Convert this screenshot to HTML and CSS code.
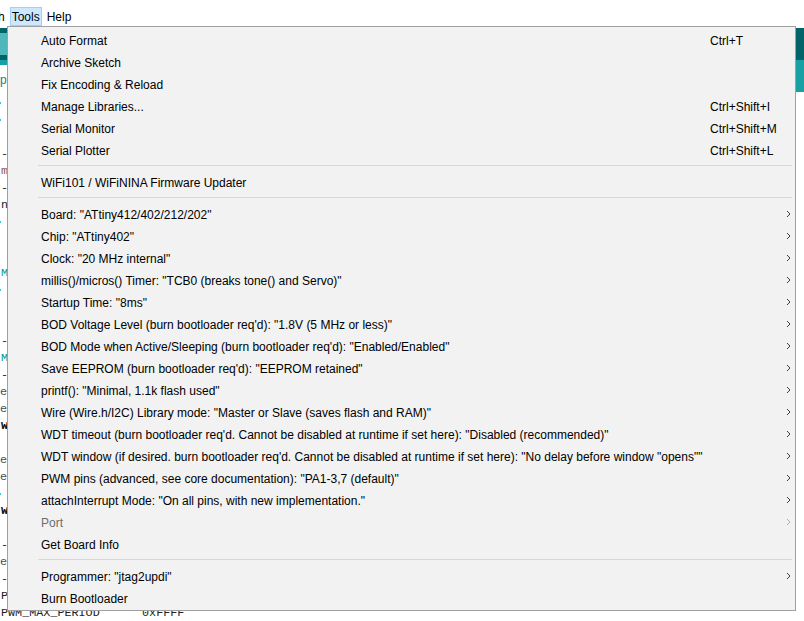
FILE: index.html
```html
<!DOCTYPE html>
<html>
<head>
<meta charset="utf-8">
<link rel="stylesheet" href="styles.css">
</head>
<body>
<div class="menubar">
  <span class="mb-item cut">h</span>
  <span class="mb-item active">Tools</span>
  <span class="mb-item">Help</span>
</div>
<div class="toolbar"><div class="tb-btn"></div></div>
<div class="tabbar"><div class="tab">p</div></div>
<div class="editor">
<div class="ln"><span class="dot"></span></div>
<div class="ln"><span class="dot"></span></div>
<div class="ln"></div>
<div class="ln dk">-</div>
<div class="ln or">m</div>
<div class="ln dk">-</div>
<div class="ln dk">n</div>
<div class="ln"><span class="dot"></span></div>
<div class="ln"></div>
<div class="ln"></div>
<div class="ln tl">M</div>
<div class="ln"><span class="dot"></span></div>
<div class="ln"></div>
<div class="ln"></div>
<div class="ln dk">-</div>
<div class="ln tl">M</div>
<div class="ln dk">-</div>
<div class="ln gr">e</div>
<div class="ln gr">e</div>
<div class="ln bd">W</div>
<div class="ln"></div>
<div class="ln gr">e</div>
<div class="ln gr">e</div>
<div class="ln"><span class="dot"></span></div>
<div class="ln bd">W</div>
<div class="ln"></div>
<div class="ln dk">-</div>
<div class="ln gr">e</div>
<div class="ln dk">-</div>
<div class="ln dk">P</div>
<div class="ln dk">PWM_MAX_PERIOD      0xFFFF</div>
</div>

<div class="menu">
  <div class="item"><span>Auto Format</span><span class="sc">Ctrl+T</span><span></span></div>
  <div class="item"><span>Archive Sketch</span><span class="sc"></span><span></span></div>
  <div class="item"><span>Fix Encoding &amp; Reload</span><span class="sc"></span><span></span></div>
  <div class="item"><span>Manage Libraries...</span><span class="sc">Ctrl+Shift+I</span><span></span></div>
  <div class="item"><span>Serial Monitor</span><span class="sc">Ctrl+Shift+M</span><span></span></div>
  <div class="item"><span>Serial Plotter</span><span class="sc">Ctrl+Shift+L</span><span></span></div>
  <div class="sep"></div>
  <div class="item"><span>WiFi101 / WiFiNINA Firmware Updater</span><span class="sc"></span><span></span></div>
  <div class="sep"></div>
  <div class="item"><span>Board: "ATtiny412/402/212/202"</span><span class="sc"></span><span class="arr"><svg width="6" height="9" viewBox="0 0 6 9"><path d="M1 1 L4 4 L1 7"/></svg></span></div>
  <div class="item"><span>Chip: "ATtiny402"</span><span class="sc"></span><span class="arr"><svg width="6" height="9" viewBox="0 0 6 9"><path d="M1 1 L4 4 L1 7"/></svg></span></div>
  <div class="item"><span>Clock: "20 MHz internal"</span><span class="sc"></span><span class="arr"><svg width="6" height="9" viewBox="0 0 6 9"><path d="M1 1 L4 4 L1 7"/></svg></span></div>
  <div class="item"><span>millis()/micros() Timer: "TCB0 (breaks tone() and Servo)"</span><span class="sc"></span><span class="arr"><svg width="6" height="9" viewBox="0 0 6 9"><path d="M1 1 L4 4 L1 7"/></svg></span></div>
  <div class="item"><span>Startup Time: "8ms"</span><span class="sc"></span><span class="arr"><svg width="6" height="9" viewBox="0 0 6 9"><path d="M1 1 L4 4 L1 7"/></svg></span></div>
  <div class="item"><span>BOD Voltage Level (burn bootloader req'd): "1.8V (5 MHz or less)"</span><span class="sc"></span><span class="arr"><svg width="6" height="9" viewBox="0 0 6 9"><path d="M1 1 L4 4 L1 7"/></svg></span></div>
  <div class="item"><span>BOD Mode when Active/Sleeping (burn bootloader req'd): "Enabled/Enabled"</span><span class="sc"></span><span class="arr"><svg width="6" height="9" viewBox="0 0 6 9"><path d="M1 1 L4 4 L1 7"/></svg></span></div>
  <div class="item"><span>Save EEPROM (burn bootloader req'd): "EEPROM retained"</span><span class="sc"></span><span class="arr"><svg width="6" height="9" viewBox="0 0 6 9"><path d="M1 1 L4 4 L1 7"/></svg></span></div>
  <div class="item"><span>printf(): "Minimal, 1.1k flash used"</span><span class="sc"></span><span class="arr"><svg width="6" height="9" viewBox="0 0 6 9"><path d="M1 1 L4 4 L1 7"/></svg></span></div>
  <div class="item"><span>Wire (Wire.h/I2C) Library mode: "Master or Slave (saves flash and RAM)"</span><span class="sc"></span><span class="arr"><svg width="6" height="9" viewBox="0 0 6 9"><path d="M1 1 L4 4 L1 7"/></svg></span></div>
  <div class="item"><span>WDT timeout (burn bootloader req'd. Cannot be disabled at runtime if set here): "Disabled (recommended)"</span><span class="sc"></span><span class="arr"><svg width="6" height="9" viewBox="0 0 6 9"><path d="M1 1 L4 4 L1 7"/></svg></span></div>
  <div class="item"><span>WDT window (if desired. burn bootloader req'd. Cannot be disabled at runtime if set here): "No delay before window "opens""</span><span class="sc"></span><span class="arr"><svg width="6" height="9" viewBox="0 0 6 9"><path d="M1 1 L4 4 L1 7"/></svg></span></div>
  <div class="item"><span>PWM pins (advanced, see core documentation): "PA1-3,7 (default)"</span><span class="sc"></span><span class="arr"><svg width="6" height="9" viewBox="0 0 6 9"><path d="M1 1 L4 4 L1 7"/></svg></span></div>
  <div class="item"><span>attachInterrupt Mode: "On all pins, with new implementation."</span><span class="sc"></span><span class="arr"><svg width="6" height="9" viewBox="0 0 6 9"><path d="M1 1 L4 4 L1 7"/></svg></span></div>
  <div class="item disabled"><span>Port</span><span class="sc"></span><span class="arr"><svg width="6" height="9" viewBox="0 0 6 9"><path d="M1 1 L4 4 L1 7"/></svg></span></div>
  <div class="item"><span>Get Board Info</span><span class="sc"></span><span></span></div>
  <div class="sep"></div>
  <div class="item"><span>Programmer: "jtag2updi"</span><span class="sc"></span><span class="arr"><svg width="6" height="9" viewBox="0 0 6 9"><path d="M1 1 L4 4 L1 7"/></svg></span></div>
  <div class="item"><span>Burn Bootloader</span><span class="sc"></span><span></span></div>
</div>
</body>
</html>
```
FILE: styles.css
```css
html, body {
  margin: 0;
  padding: 0;
}
body {
  width: 804px;
  height: 621px;
  overflow: hidden;
  position: relative;
  background: #ffffff;
  font-family: "Liberation Sans", Arial, sans-serif;
  font-size: 12px;
  color: #000;
}
.menubar {
  display: flex;
  gap: 3px;
  padding-top: 7px;
  height: 19px;
}
.mb-item {
  height: 17px;
  line-height: 18px;
  padding: 0 1px;
  border: 1px solid transparent;
}
.mb-item.cut {
  margin-left: -4px;
}
.mb-item.active {
  background: #cce8ff;
  border-color: #99d1ff;
}
.toolbar {
  margin-top: 2px;
  height: 32px;
  background: #006468;
  overflow: hidden;
}
.tb-btn {
  width: 30px;
  height: 22px;
  margin: 5px 0 0 -22px;
  background: #4db7bb;
}
.tabbar {
  height: 32px;
  background: #17a1a5;
  overflow: hidden;
}
.tab {
  margin-top: 5px;
  height: 27px;
  width: 60px;
  line-height: 30px;
  background: #fff;
  color: #1a7c80;
}
.editor {
  padding-top: 3px;
  font-family: "Liberation Mono", "Courier New", monospace;
  font-size: 11.75px;
  line-height: 17px;
}
.ln {
  height: 17px;
  padding-left: 1px;
  white-space: pre;
}
.dot {
  display: inline-block;
  width: 1px;
  height: 2px;
  background: #33c3f0;
  margin-left: -1px;
  vertical-align: middle;
}
.dk { color: #222; }
.or { color: #8a5a60; }
.tl { color: #00979c; }
.gr { color: #434f54; margin-left: -1px; }
.bd { color: #111; font-weight: bold; }

.menu {
  position: absolute;
  left: 7px;
  top: 26px;
  width: 787px;
  border: 1px solid #a0a0a0;
  background: #f2f2f2;
  padding: 2px 0 1px;
}
.item {
  display: grid;
  grid-template-columns: 1fr 76px 9px;
  height: 21px;
  padding-top: 1px;
  line-height: 22px;
  padding-left: 33px;
  white-space: nowrap;
}
.item.disabled {
  color: #6d6d6d;
}
.sc {
  white-space: nowrap;
}
.arr svg {
  display: block;
  margin-top: 6px;
  fill: none;
  stroke: #404040;
  stroke-width: 1;
}
.item.disabled .arr svg {
  stroke: #b0b0b0;
}
.sep {
  height: 1px;
  background: #d7d7d7;
  margin: 4px 3px 5px 30px;
}
```
